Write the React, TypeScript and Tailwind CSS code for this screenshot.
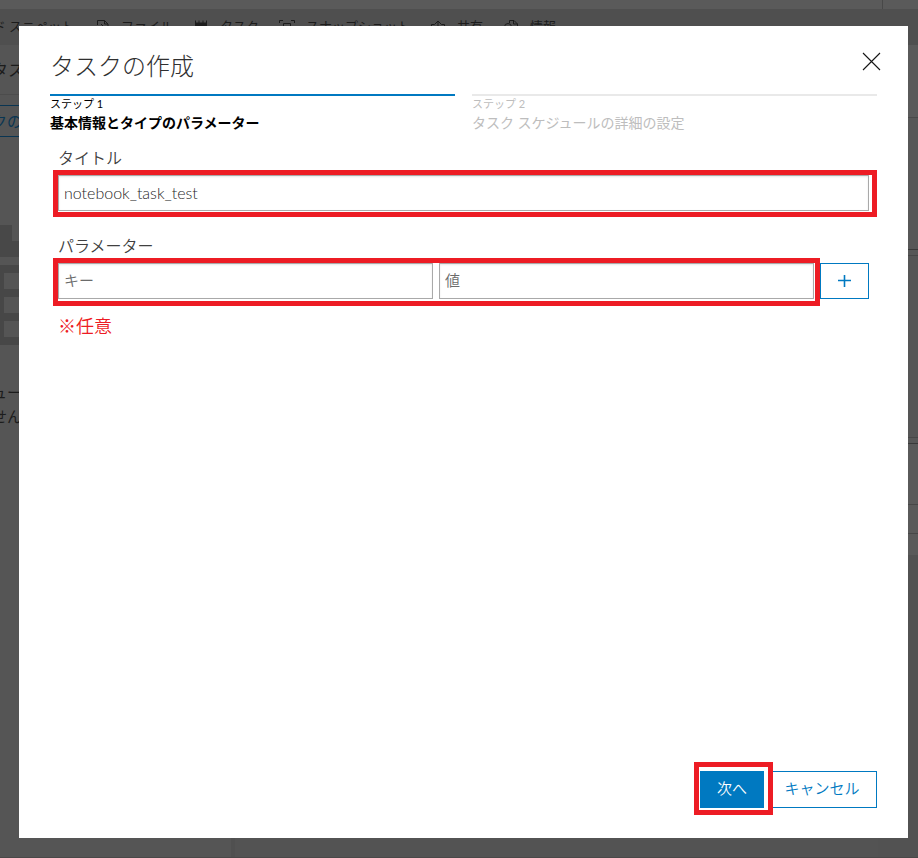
import { useState } from "react";
import type { FormEvent, ReactNode } from "react";

/* ------------------------------------------------------------------ */
/*  Types                                                              */
/* ------------------------------------------------------------------ */

interface ToolbarItem {
  label: string;
  icon: ReactNode;
}

interface Step {
  label: string;
  title: string;
  active: boolean;
}

/* ------------------------------------------------------------------ */
/*  Data                                                               */
/* ------------------------------------------------------------------ */

const TOOLBAR: ToolbarItem[] = [
  {
    label: "ファイル",
    icon: <path d="M2.500 6V1.500h7l3.500 3.500v10.500H2.500V11M9.500 1.500V5H13M0 8.500h9M6 5l3.500 3.500L6 12" />,
  },
  {
    label: "タスク",
    icon: (
      <>
        <path d="M1 3.500h12V7H1z" fill="currentColor" stroke="none" />
        <path d="M1.500 1.500v3M5 1.500v3M9 1.500v3M12.500 1.500v3M1.500 6v9.500h11V6" />
      </>
    ),
  },
  {
    label: "スナップショット",
    icon: <path d="M-.5 4V1.500H3M11 1.500h3.500V4M-.5 13v2.500H3M11 15.500h3.500V13M3.500 12.500v-8h7v8z" />,
  },
  {
    label: "共有",
    icon: <path d="M7 12V2M3.500 5.500 7 2l3.500 3.500M3.500 5.500h-3v10h13v-10h-3" />,
  },
  {
    label: "情報",
    icon: <path d="M5.500 4V1.500h4.500l3.500 3.500v10.500H9M9.500 1.500V5h4M.5 8a3.500 3.500 0 1 0 7 0 3.500 3.500 0 1 0-7 0M6.500 10.500 10 14" />,
  },
];

const STEPS: Step[] = [
  { label: "ステップ 1", title: "基本情報とタイプのパラメーター", active: true },
  { label: "ステップ 2", title: "タスク スケジュールの詳細の設定", active: false },
];

/* ------------------------------------------------------------------ */
/*  Page behind the dialog                                             */
/* ------------------------------------------------------------------ */

function NotebookPage() {
  return (
    <div
      aria-hidden="true"
      className="flex h-screen flex-col overflow-hidden border-b border-[#4a4848] bg-[#555555] text-[#1c1c1c]"
    >
      <div className="flex h-[9px] shrink-0 justify-end bg-[#5a5a5a]">
        <div className="w-9 border-l border-[#484848]" />
      </div>

      {/* Toolbar */}
      <div className="flex h-9 shrink-0 items-center gap-[21px] bg-[#4f4f4f] text-[13px] whitespace-nowrap">
        <span className="flex w-[74px] justify-end">ド スニペット</span>
        {TOOLBAR.map((item) => (
          <span key={item.label} className="flex items-center gap-3">
            <svg
              width="14"
              height="17"
              viewBox="0 0 14 17"
              fill="none"
              stroke="currentColor"
              className="overflow-visible"
            >
              {item.icon}
            </svg>
            {item.label}
          </span>
        ))}
      </div>

      <div className="flex flex-1">
        {/* Task list */}
        <div className="flex w-[231px] flex-col">
          <div className="flex h-[50px] items-center border-b border-[#4c4c4c] text-base">
            <span className="-ml-2">タス</span>
          </div>
          <div className="mt-[10px] flex h-8 items-center border-y border-[#0a3552] text-[15px] text-[#0a3552]">
            <span className="-ml-2">クの</span>
          </div>
          <div className="mt-[88px] h-4 w-3 bg-[#484848]" />
          <div className="h-4 bg-[#484848]" />
          <div className="mt-2 flex flex-col gap-2 bg-[#474747] py-2 pl-1">
            <div className="h-4 bg-[#555555]" />
            <div className="h-4 bg-[#555555]" />
            <div className="h-4 bg-[#555555]" />
          </div>
          <div className="mt-[35px] text-[15px] leading-6">
            <p className="-ml-2">ュー</p>
            <p className="-ml-2">せん</p>
          </div>
        </div>
        <div className="w-1 bg-[#505050]" />
        <div className="flex-1 bg-[#535353]" />

        {/* Notebook cells */}
        <div className="flex w-10 flex-col bg-[#575757]">
          <div className="h-[73px] border-b border-[#494949] bg-[#5a5a5a]" />
          <div className="h-[132px] border-b border-[#393939]" />
          <div className="h-[6px] border-b border-[#474747]" />
          <div className="h-[182px] border-b border-[#474747] bg-[#555555]" />
          <div className="h-[6px] border-b border-[#393939]" />
          <div className="h-[61px] border-b border-[#474747] bg-[#5a5a5a]" />
          <div className="h-[29px] border-b border-[#474747] bg-[#5a5a5a]" />
          <div className="h-[21px] bg-[#5a5a5a]" />
          <div className="flex-1 bg-[#525252]" />
        </div>
      </div>
    </div>
  );
}

/* ------------------------------------------------------------------ */
/*  Dialog                                                             */
/* ------------------------------------------------------------------ */

const LABEL = "pl-[5px] text-base leading-6 font-[350] text-[#404040]";

const INPUT =
  "h-9 min-w-0 flex-1 border border-[#a9a9a9] bg-white px-[5px] pb-[2px] font-[350] text-[#1f1f1f] shadow-[inset_0_1px_2px_#e8e8e8] outline-none placeholder:text-[#6b6b6b]";

function TaskDialog() {
  const [title, setTitle] = useState("notebook_task_test");
  const [paramKey, setParamKey] = useState("");
  const [paramValue, setParamValue] = useState("");

  const handleSubmit = (e: FormEvent) => e.preventDefault();

  return (
    <form
      role="dialog"
      aria-labelledby="dialog-title"
      onSubmit={handleSubmit}
      className="flex flex-1 flex-col bg-white px-[31px] pt-[22px] pb-[23px]"
    >
      <div className="flex items-start justify-between">
        <h1 id="dialog-title" className="text-2xl leading-9 font-light text-[#303030]">
          タスクの作成
        </h1>
        <button type="button" aria-label="閉じる" className="-mr-2 p-1">
          <svg width="19" height="19" viewBox="0 0 19 19" fill="none" stroke="#151515" strokeWidth="1.1">
            <path d="M1 1l17 17M18 1L1 18" />
          </svg>
        </button>
      </div>

      {/* Steps */}
      <ol className="mt-[10px] grid grid-cols-2 gap-[17px]">
        {STEPS.map((step) => (
          <li
            key={step.label}
            className={`border-t-2 ${step.active ? "border-[#0079c1] text-black" : "border-[#e9e9e9] text-[#bdbdbd]"}`}
          >
            <p className="text-[11px] leading-4">{step.label}</p>
            <p className={`text-sm leading-[22px] ${step.active ? "font-bold" : "font-normal"}`}>
              {step.title}
            </p>
          </li>
        ))}
      </ol>

      {/* Fields */}
      <div className="mt-3 ml-[3px] flex flex-col">
        <label htmlFor="task-title" className={LABEL}>
          タイトル
        </label>
        <div className="flex border-5 border-[#ed1c24] pr-[3px] pb-px">
          <input
            id="task-title"
            type="text"
            value={title}
            onChange={(e) => setTitle(e.target.value)}
            className={`text-base ${INPUT}`}
          />
        </div>

        <label htmlFor="param-key" className={`mt-[17px] ${LABEL}`}>
          パラメーター
        </label>
        <div className="flex items-start pr-2">
          <div className="flex flex-1 gap-[6px] border-5 border-[#ed1c24] pr-px pb-[2px]">
            <input
              id="param-key"
              type="text"
              placeholder="キー"
              value={paramKey}
              onChange={(e) => setParamKey(e.target.value)}
              className={`text-[15px] ${INPUT}`}
            />
            <input
              type="text"
              aria-label="値"
              placeholder="値"
              value={paramValue}
              onChange={(e) => setParamValue(e.target.value)}
              className={`text-[15px] ${INPUT}`}
            />
          </div>
          <button
            type="button"
            aria-label="追加"
            className="mt-[5px] flex h-9 w-[49px] items-center justify-center border border-[#0079c1] bg-white text-[#0079c1]"
          >
            <svg width="13" height="13" viewBox="0 0 13 13" fill="none" stroke="currentColor" strokeWidth="1.6">
              <path d="M6.500 0v12M0 5.500h13" />
            </svg>
          </button>
        </div>
        <p className="mt-2 pl-[5px] text-lg leading-6 font-[350] text-[#ed1c24]">※任意</p>
      </div>

      {/* Actions */}
      <div className="mt-auto flex items-end justify-end text-[15px] font-[350]">
        <div className="border-5 border-[#ed1c24] pt-1 pr-1 pb-[2px] pl-px">
          <button type="submit" className="h-[37px] w-16 bg-[#0079c1] pb-[2px] text-white">
            次へ
          </button>
        </div>
        <button
          type="button"
          className="mb-[7px] h-[37px] w-[104px] border border-l-0 border-[#0079c1] bg-white pr-[5px] pb-[2px] text-[#0079c1]"
        >
          キャンセル
        </button>
      </div>
    </form>
  );
}

export default function App() {
  return (
    <div className="font-[Lato,'Noto_Sans_CJK_JP',sans-serif]">
      <NotebookPage />
      <div className="fixed inset-0 flex pt-[26px] pr-[10px] pb-5 pl-[19px]">
        <TaskDialog />
      </div>
    </div>
  );
}
